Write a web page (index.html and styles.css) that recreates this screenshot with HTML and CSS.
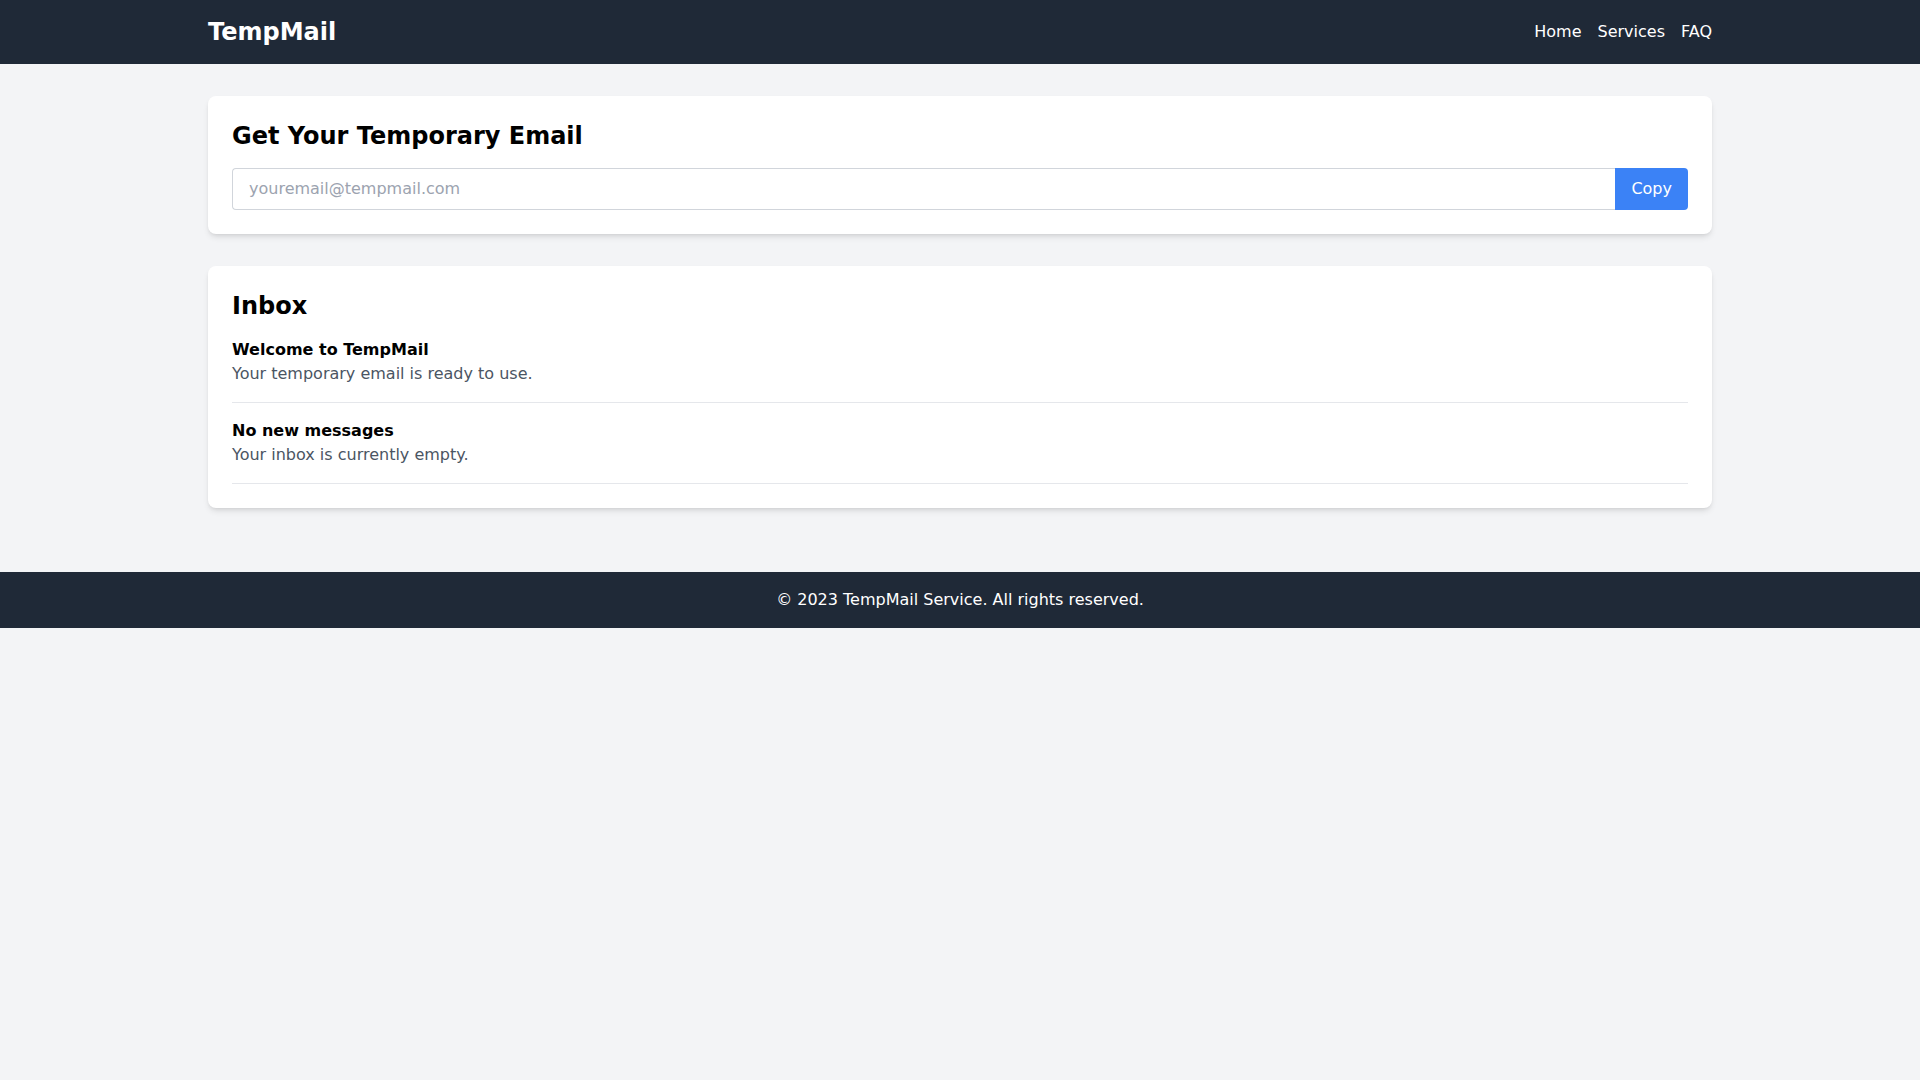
FILE: index.html
```html
<!DOCTYPE html>
<html lang="en">
<head>
  <meta charset="UTF-8" />
  <meta name="viewport" content="width=device-width, initial-scale=1.0"/>
  <title>TempMail</title>
  <link rel="stylesheet" href="styles.css">
</head>
<body>

  <header class="topbar">
    <div class="container topbar-inner">
      <div class="logo">TempMail</div>
      <nav class="nav">
        <a href="#">Home</a>
        <a href="#">Services</a>
        <a href="#">FAQ</a>
      </nav>
    </div>
  </header>

  <main class="container main">
    <section class="card">
      <h2>Get Your Temporary Email</h2>
      <div class="email-row">
        <input id="email" type="text" placeholder="youremail@tempmail.com" readonly>
        <button class="copy-btn">Copy</button>
      </div>
    </section>

    <section class="card">
      <h2>Inbox</h2>
      <div class="inbox">
        <div class="message">
          <h3>Welcome to TempMail</h3>
          <p>Your temporary email is ready to use.</p>
        </div>
        <div class="message">
          <h3>No new messages</h3>
          <p>Your inbox is currently empty.</p>
        </div>
      </div>
    </section>
  </main>

  <footer class="footer">
    <p>&copy; 2023 TempMail Service. All rights reserved.</p>
  </footer>

</body>
</html>
```

FILE: styles.css
```css
body {
  margin: 0;
  font-family: 'DejaVu Sans', sans-serif;
  font-size: 16px;
  line-height: 24px;
  background: #f3f4f6;
  color: #000;
}

.container {
  max-width: 1536px;
  margin: 0 auto;
  padding: 0 16px;
  box-sizing: border-box;
}

.topbar {
  background: #1f2937;
  color: white;
  padding: 16px 0;
}

.topbar-inner {
  display: flex;
  justify-content: space-between;
  align-items: center;
}

.logo {
  font-size: 24px;
  line-height: 32px;
  font-weight: bold;
}

.nav {
  display: flex;
  gap: 16px;
}

.nav a {
  color: white;
  text-decoration: none;
}

.main {
  padding-top: 32px;
  padding-bottom: 32px;
}

.card {
  background: white;
  border-radius: 8px;
  box-shadow: 0 4px 6px -1px rgba(0,0,0,0.1), 0 2px 4px -2px rgba(0,0,0,0.1);
  padding: 24px;
  margin-bottom: 32px;
}

.card:last-child {
  margin-bottom: 0;
}

.card h2 {
  font-size: 24px;
  line-height: 32px;
  font-weight: bold;
  margin: 0 0 16px;
}

.email-row {
  display: flex;
}

.email-row input {
  flex: 1;
  font-family: inherit;
  font-size: 16px;
  line-height: 24px;
  padding: 8px 16px;
  border: 1px solid #d1d5db;
  border-right: none;
  border-radius: 4px 0 0 4px;
  outline: none;
  color: #000;
}

.email-row input::placeholder {
  color: #9ca3af;
}

.copy-btn {
  background: #3b82f6;
  color: white;
  border: none;
  font-family: inherit;
  font-size: 16px;
  line-height: 24px;
  padding: 8px 16px;
  border-radius: 0 4px 4px 0;
  cursor: pointer;
}

.inbox {
  display: flex;
  flex-direction: column;
  gap: 16px;
}

.message {
  border-bottom: 1px solid #e5e7eb;
  padding-bottom: 16px;
}

.message h3 {
  font-size: 16px;
  line-height: 24px;
  font-weight: bold;
  margin: 0;
}

.message p {
  margin: 0;
  color: #4b5563;
}

.footer {
  background: #1f2937;
  color: white;
  text-align: center;
  padding: 16px 0;
  margin-top: 32px;
}

.footer p {
  margin: 0;
}
```
